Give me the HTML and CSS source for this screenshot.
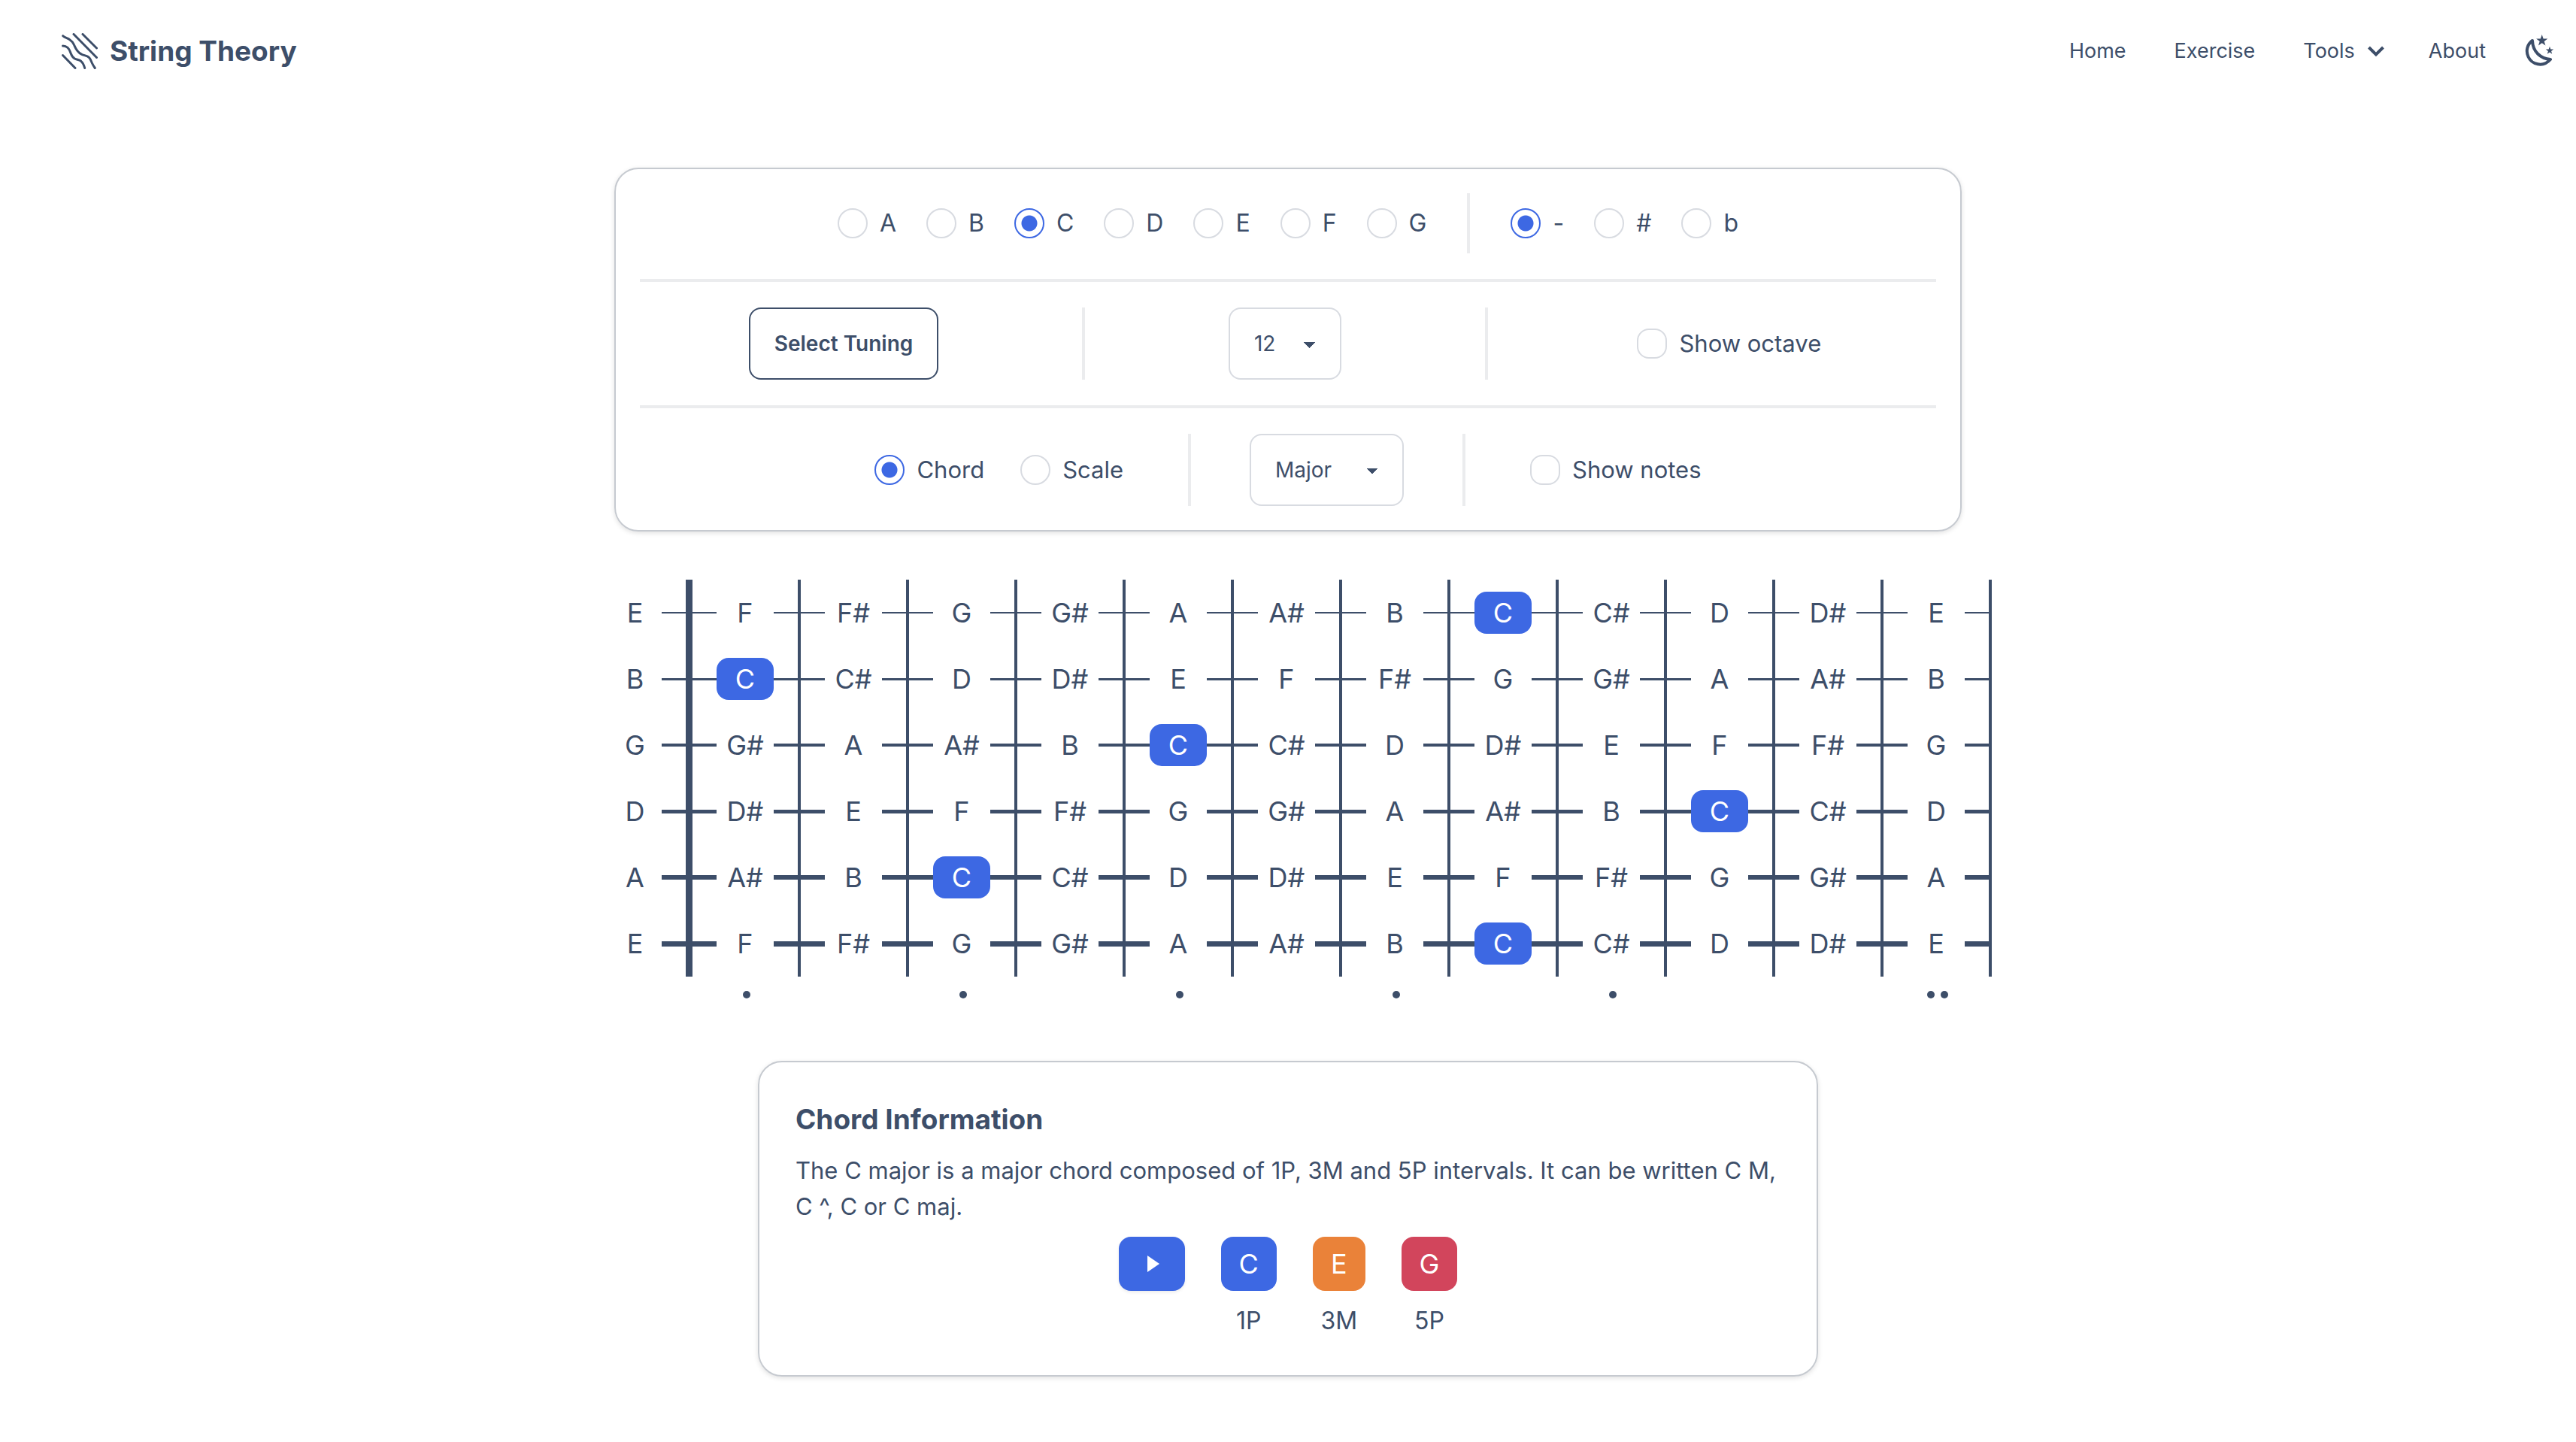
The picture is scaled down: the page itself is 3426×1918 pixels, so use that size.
FILE: index.html
```html
<!DOCTYPE html>
<html lang="en">
<head>
<meta charset="utf-8">
<title>String Theory</title>
<link rel="stylesheet" href="styles.css">
</head>
<body>
<header class="navbar">
  <a class="brand" href="#">
    <svg class="brand-icon" viewBox="0 0 48 48" aria-hidden="true">
      <path d="M28 1.500L46.500 20M16 1.500L46.500 32.500M1.500 29.500L18 46.500M1.700 3.700C4.500 6.500 7.500 6.500 10.700 8.700C13.500 10.500 15.500 13 16.700 16C18 19 18.500 20.500 20.700 23.300C22.500 25.700 24.500 27.500 27.300 28.700C31 30 34.500 30 36.700 32.700C38.500 34.800 39 36.500 40 39C41.500 42.500 42.500 44 44.300 46.500M1.500 17C4 17 6 17.600 8 19.300C10.500 21.500 11.200 24.500 12.300 27.300C13.400 30.500 14.500 32.500 17.300 34C20 35.500 23 35.200 25.700 37.300C28.700 39.800 29.800 43 30.700 46.500"/>
    </svg>
    String Theory
  </a>
  <nav class="nav">
    <a class="nav-item" href="#">Home</a>
    <a class="nav-item" href="#">Exercise</a>
    <button class="nav-item nav-tools" type="button">Tools
      <svg class="chevron" viewBox="0 0 24 16" aria-hidden="true"><path d="M2.500 3L12 12.500L21.500 3"/></svg>
    </button>
    <a class="nav-item" href="#">About</a>
    <button class="theme" type="button" aria-label="Toggle theme">
      <svg class="moon" viewBox="0 0 40 44" aria-hidden="true">
        <path class="moon-line" d="M10 8C3 13 1 22 4.500 29.500C9 39.500 24 44.500 34 33C21 32 10.500 23 10 8Z"/>
        <path d="M22.700 0L24.600 5.400L30.300 5.500L25.700 9L27.400 14.500L22.700 11.200L18 14.500L19.700 9L15.100 5.500L20.800 5.400ZM33 15.800L34.300 19.500L38.200 19.600L35.100 22L36.200 25.700L33 23.500L29.800 25.700L30.900 22L27.800 19.600L31.700 19.500Z"/>
      </svg>
    </button>
  </nav>
</header>

<main class="page">
  <form class="card controls">
    <div class="row row-center">
      <div class="group">
        <label class="option"><input class="radio" type="radio" name="note">A</label>
        <label class="option"><input class="radio" type="radio" name="note">B</label>
        <label class="option"><input class="radio" type="radio" name="note" checked>C</label>
        <label class="option"><input class="radio" type="radio" name="note">D</label>
        <label class="option"><input class="radio" type="radio" name="note">E</label>
        <label class="option"><input class="radio" type="radio" name="note">F</label>
        <label class="option"><input class="radio" type="radio" name="note">G</label>
      </div>
      <div class="split"></div>
      <div class="group">
        <label class="option"><input class="radio" type="radio" name="accidental" checked>-</label>
        <label class="option"><input class="radio" type="radio" name="accidental">#</label>
        <label class="option"><input class="radio" type="radio" name="accidental">b</label>
      </div>
    </div>
    <hr class="rule">
    <div class="row row-words">
      <div class="cell"><button class="tuning" type="button">Select Tuning</button></div>
      <div class="split"></div>
      <div class="cell">
        <select class="select" aria-label="Number of frets"><option>12</option></select>
      </div>
      <div class="split"></div>
      <div class="cell"><label class="option"><input class="check" type="checkbox">Show octave</label></div>
    </div>
    <hr class="rule">
    <div class="row row-center row-words row-padded">
      <div class="group group-wide">
        <label class="option"><input class="radio" type="radio" name="kind" checked>Chord</label>
        <label class="option"><input class="radio" type="radio" name="kind">Scale</label>
      </div>
      <div class="split"></div>
      <div class="group">
        <select class="select select-kind" aria-label="Chord type"><option>Major</option></select>
      </div>
      <div class="split"></div>
      <div class="group"><label class="option"><input class="check" type="checkbox">Show notes</label></div>
    </div>
  </form>

  <section class="board" id="board" aria-label="Fretboard"></section>

  <section class="card info">
    <h2 class="info-title">Chord Information</h2>
    <p class="info-text">The C major is a major chord composed of 1P, 3M and 5P intervals. It can be written C M, C ^, C or C maj.</p>
    <div class="chord">
      <button class="play" type="button" aria-label="Play chord">
        <svg class="play-icon" viewBox="0 0 16 22" aria-hidden="true"><path d="M0 0L16 11L0 22Z"/></svg>
      </button>
      <div class="tone"><button class="chip" type="button">C</button><span>1P</span></div>
      <div class="tone"><button class="chip chip-third" type="button">E</button><span>3M</span></div>
      <div class="tone"><button class="chip chip-fifth" type="button">G</button><span>5P</span></div>
    </div>
  </section>
</main>
<script src="board.js"></script>
</body>
</html>
```
FILE: styles.css
```css
:root {
  --ink: #3d4e69;
  --primary: #3d68e3;
  --third: #ea8239;
  --fifth: #d2455c;
  --field: #d8dbe1;
  --rule: #ebecee;
  --edge: #c6cad0;
}
* { box-sizing: border-box; }
body {
  margin: 0;
  background: #fff;
  color: var(--ink);
  font-family: Inter, "Liberation Sans", sans-serif;
  font-size: 32px;
  line-height: 48px;
}
button, input, select { font: inherit; color: inherit; margin: 0; }
button { cursor: pointer; }
a { color: inherit; text-decoration: none; }

.navbar {
  display: flex;
  align-items: center;
  justify-content: space-between;
  padding: 20px 24px 20px 82px;
}
.brand {
  display: flex;
  align-items: center;
  gap: 16px;
  font-size: 37px;
  font-weight: 700;
}
.brand-icon { width: 48px; height: 48px; fill: none; stroke: currentColor; stroke-width: 3; stroke-linecap: round; }
.nav { display: flex; align-items: center; font-size: 27px; line-height: 40px; }
.nav-item { display: flex; align-items: center; padding: 28px 32px; border: 0; background: none; }
.nav-tools { gap: 16px; padding-right: 26px; }
.chevron { width: 24px; height: 16px; fill: none; stroke: currentColor; stroke-width: 4; }
.theme { display: flex; padding: 16px 4px 16px 20px; border: 0; background: none; }
.moon { width: 40px; height: 44px; fill: currentColor; }
.moon-line { fill: none; stroke: currentColor; stroke-width: 4; stroke-linejoin: round; }

.page { display: flex; flex-direction: column; align-items: center; gap: 64px; padding: 87px 32px; }
.card {
  border: 2px solid var(--edge);
  border-radius: 32px;
  box-shadow: 0 2px 6px rgba(0, 0, 0, .12);
}
.controls { width: 100%; max-width: 1792px; padding: 32px; }
.row { display: flex; align-items: center; min-height: 80px; }
.row-center { justify-content: center; }
.row-words { font-size: 31px; }
.cell { display: flex; flex: 1 1 auto; justify-content: center; }
.group { display: flex; gap: 24px; }
.group-wide { gap: 32px; }
.row-padded .group { padding: 0 32px; }
.split { align-self: stretch; width: 4px; margin: 0 46px; background: var(--rule); }
.rule { height: 4px; margin: 34px 0; border: 0; background: var(--rule); }
.option { display: flex; align-items: center; gap: 16px; padding: 8px; }
.radio, .check {
  appearance: none;
  width: 40px;
  height: 40px;
  border: 2px solid var(--field);
  border-radius: 50%;
  background: #fff;
}
.check { border-radius: 16px; }
.radio:checked { border-color: var(--primary); background: radial-gradient(circle, var(--primary) 10px, #fff 11px); }
.tuning {
  height: 96px;
  padding: 0 32px;
  border: 2px solid var(--ink);
  border-radius: 16px;
  background: #fff;
  font-size: 28px;
  font-weight: 600;
}
.select {
  appearance: none;
  width: 150px;
  height: 96px;
  padding: 0 64px 0 32px;
  border: 2px solid var(--field);
  border-radius: 16px;
  background-color: #fff;
  background-image:
    linear-gradient(45deg, transparent 50%, var(--ink) 50%),
    linear-gradient(135deg, var(--ink) 50%, transparent 50%);
  background-position: calc(100% - 40px) calc(50% + 2px), calc(100% - 32px) calc(50% + 2px);
  background-size: 8px 8px;
  background-repeat: no-repeat;
  font-size: 28px;
}
.select-kind { width: 205px; }

.board { width: 100%; max-width: 1792px; font-size: 36px; line-height: 56px; }
.string { display: flex; --thick: 2px; }
.open, .fret { display: flex; flex: none; align-items: center; height: 88px; }
.open { width: 104px; border-right: 9px solid var(--ink); }
.open-note { flex: 1; padding-right: 8px; text-align: center; }
.fret { width: 144px; border-right: 4px solid var(--ink); }
.wire { flex: none; width: 32px; height: var(--thick); background: var(--ink); }
.note { flex: 1; border-radius: 16px; text-align: center; }
.note-root { background: var(--primary); color: #fff; }
.markers { display: flex; height: 48px; padding-left: 104px; }
.marker { display: flex; flex: none; align-items: center; justify-content: center; gap: 8px; width: 144px; }
.dot { width: 10px; height: 10px; border-radius: 50%; background: var(--ink); }

.info { width: 100%; max-width: 1410px; padding: 48px; }
.info-title { margin: 0 0 16px; font-size: 37px; line-height: 56px; font-weight: 700; }
.info-text { margin: 0 0 16px; font-size: 31px; }
.chord { display: flex; justify-content: center; align-items: flex-start; gap: 48px; }
.tone { display: flex; flex-direction: column; align-items: center; gap: 16px; }
.play, .chip { height: 72px; border: 0; border-radius: 16px; background: var(--primary); color: #fff; }
.play { display: flex; align-items: center; justify-content: center; width: 88px; padding: 0; box-shadow: 0 2px 4px rgba(0, 0, 0, .08); }
.play-icon { width: 16px; height: 22px; margin-left: 4px; fill: currentColor; }
.chip { padding: 0 24px; font-size: 36px; }
.chip-third { background: var(--third); }
.chip-fifth { background: var(--fifth); }
```
FILE: board.js
```js
const NOTES = ["C", "C#", "D", "D#", "E", "F", "F#", "G", "G#", "A", "A#", "B"];
const TUNING = ["E", "B", "G", "D", "A", "E"];
const FRETS = 12;
const ROOT = "C";
const board = document.getElementById("board");

TUNING.forEach((open, index) => {
  const wire = '<span class="wire"></span>';
  let html = `<div class="open"><span class="open-note">${open}</span>${wire}</div>`;
  for (let fret = 1; fret <= FRETS; fret++) {
    const note = NOTES[(NOTES.indexOf(open) + fret) % 12];
    const root = note === ROOT ? " note-root" : "";
    html += `<div class="fret">${wire}<span class="note${root}">${note}</span>${wire}</div>`;
  }
  const string = document.createElement("div");
  string.className = "string";
  string.style.setProperty("--thick", `${index + 2}px`);
  string.innerHTML = html;
  board.append(string);
});

const markers = document.createElement("div");
markers.className = "markers";
for (let fret = 1; fret <= FRETS; fret++) {
  const count = fret === 12 ? 2 : [1, 3, 5, 7, 9].includes(fret) ? 1 : 0;
  markers.innerHTML += `<div class="marker">${'<span class="dot"></span>'.repeat(count)}</div>`;
}
board.append(markers);
```
